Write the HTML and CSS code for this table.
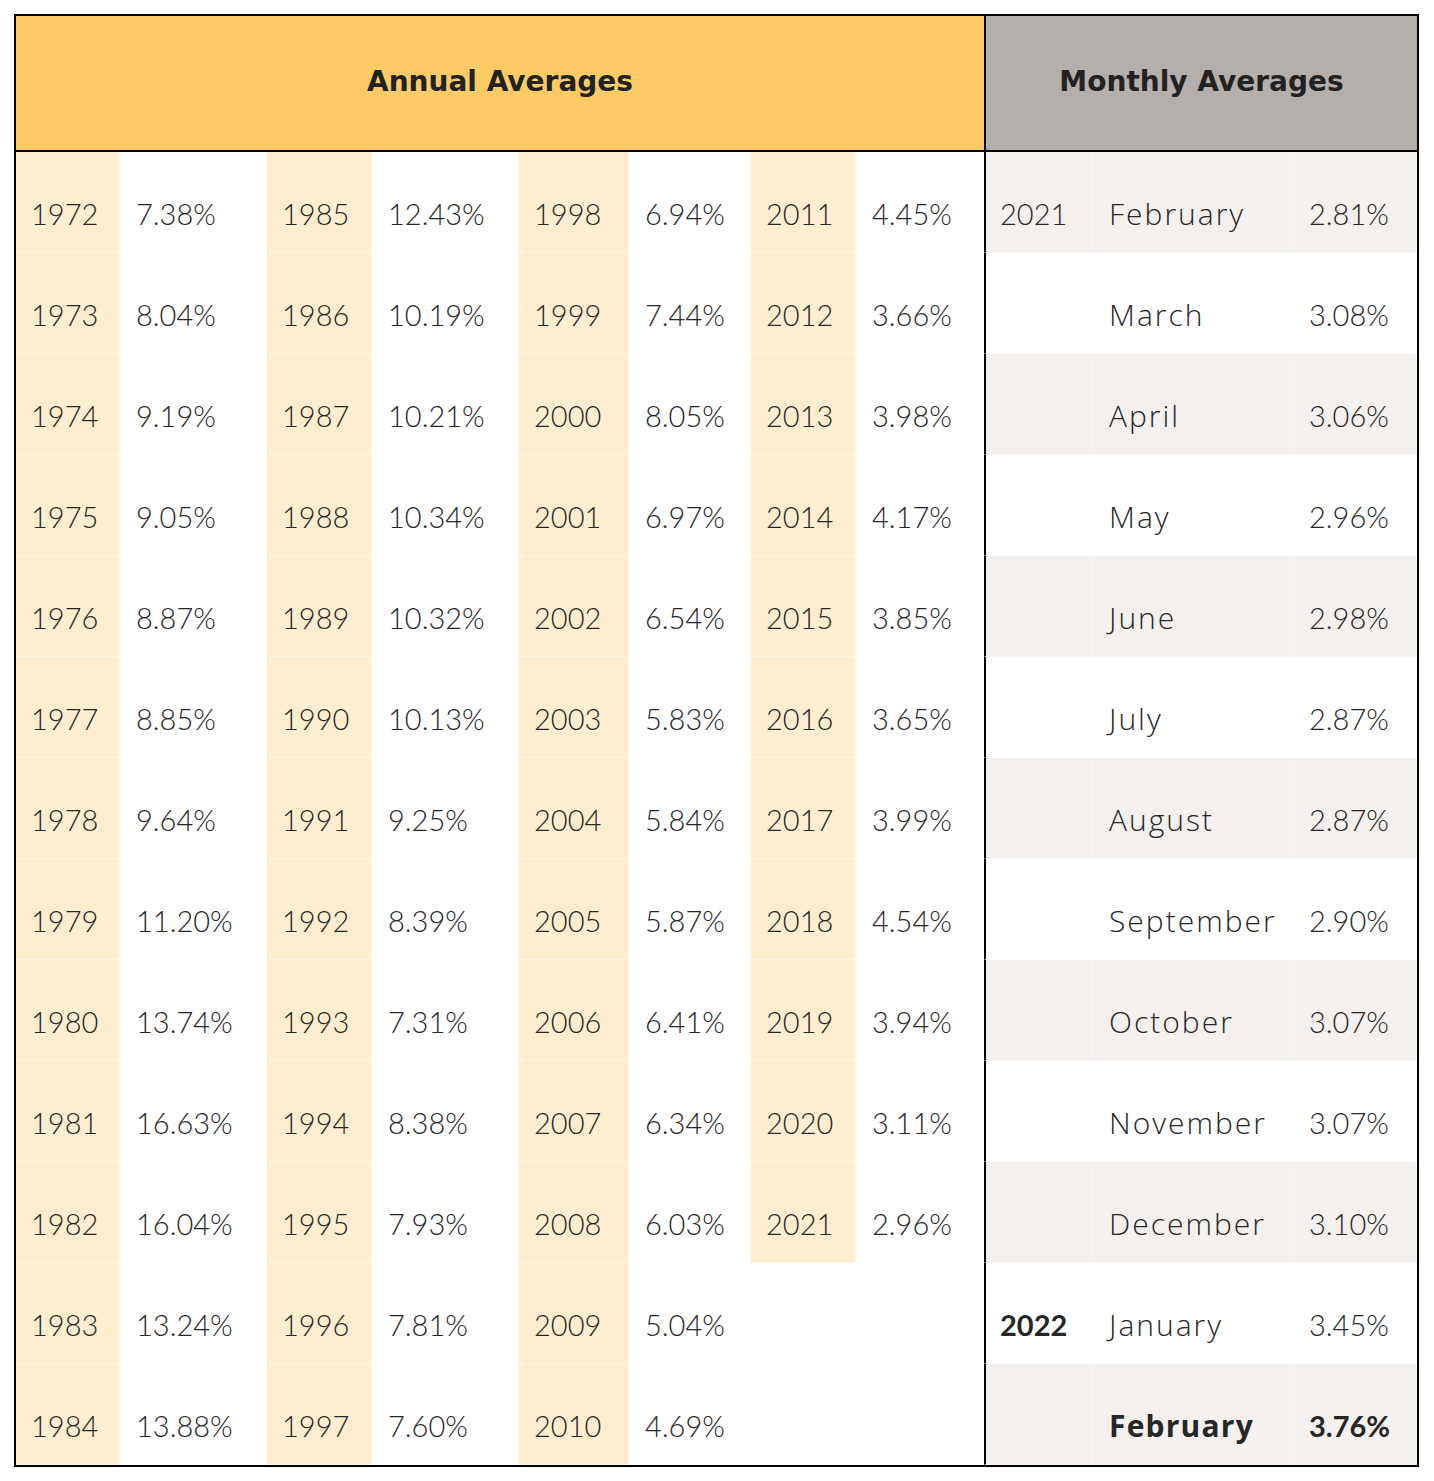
FILE: index.html
```html
<!DOCTYPE html>
<html lang="en">
<head>
<meta charset="utf-8">
<title>Annual and Monthly Averages</title>
<link rel="stylesheet" href="styles.css">
</head>
<body>
<div class="rates">
  <div class="head head-annual">Annual Averages</div>
  <div class="head head-monthly">Monthly Averages</div>

  <div class="c yr">1972</div><div class="c">7.38%</div><div class="c yr">1985</div><div class="c">12.43%</div><div class="c yr">1998</div><div class="c">6.94%</div><div class="c yr">2011</div><div class="c">4.45%</div>
  <div class="c mfirst g">2021</div><div class="c mon g">February</div><div class="c mval g">2.81%</div>

  <div class="c yr">1973</div><div class="c">8.04%</div><div class="c yr">1986</div><div class="c">10.19%</div><div class="c yr">1999</div><div class="c">7.44%</div><div class="c yr">2012</div><div class="c">3.66%</div>
  <div class="c mfirst"></div><div class="c mon">March</div><div class="c mval">3.08%</div>

  <div class="c yr">1974</div><div class="c">9.19%</div><div class="c yr">1987</div><div class="c">10.21%</div><div class="c yr">2000</div><div class="c">8.05%</div><div class="c yr">2013</div><div class="c">3.98%</div>
  <div class="c mfirst g"></div><div class="c mon g">April</div><div class="c mval g">3.06%</div>

  <div class="c yr">1975</div><div class="c">9.05%</div><div class="c yr">1988</div><div class="c">10.34%</div><div class="c yr">2001</div><div class="c">6.97%</div><div class="c yr">2014</div><div class="c">4.17%</div>
  <div class="c mfirst"></div><div class="c mon">May</div><div class="c mval">2.96%</div>

  <div class="c yr">1976</div><div class="c">8.87%</div><div class="c yr">1989</div><div class="c">10.32%</div><div class="c yr">2002</div><div class="c">6.54%</div><div class="c yr">2015</div><div class="c">3.85%</div>
  <div class="c mfirst g"></div><div class="c mon g">June</div><div class="c mval g">2.98%</div>

  <div class="c yr">1977</div><div class="c">8.85%</div><div class="c yr">1990</div><div class="c">10.13%</div><div class="c yr">2003</div><div class="c">5.83%</div><div class="c yr">2016</div><div class="c">3.65%</div>
  <div class="c mfirst"></div><div class="c mon">July</div><div class="c mval">2.87%</div>

  <div class="c yr">1978</div><div class="c">9.64%</div><div class="c yr">1991</div><div class="c">9.25%</div><div class="c yr">2004</div><div class="c">5.84%</div><div class="c yr">2017</div><div class="c">3.99%</div>
  <div class="c mfirst g"></div><div class="c mon g">August</div><div class="c mval g">2.87%</div>

  <div class="c yr">1979</div><div class="c">11.20%</div><div class="c yr">1992</div><div class="c">8.39%</div><div class="c yr">2005</div><div class="c">5.87%</div><div class="c yr">2018</div><div class="c">4.54%</div>
  <div class="c mfirst"></div><div class="c mon">September</div><div class="c mval">2.90%</div>

  <div class="c yr">1980</div><div class="c">13.74%</div><div class="c yr">1993</div><div class="c">7.31%</div><div class="c yr">2006</div><div class="c">6.41%</div><div class="c yr">2019</div><div class="c">3.94%</div>
  <div class="c mfirst g"></div><div class="c mon g">October</div><div class="c mval g">3.07%</div>

  <div class="c yr">1981</div><div class="c">16.63%</div><div class="c yr">1994</div><div class="c">8.38%</div><div class="c yr">2007</div><div class="c">6.34%</div><div class="c yr">2020</div><div class="c">3.11%</div>
  <div class="c mfirst"></div><div class="c mon">November</div><div class="c mval">3.07%</div>

  <div class="c yr">1982</div><div class="c">16.04%</div><div class="c yr">1995</div><div class="c">7.93%</div><div class="c yr">2008</div><div class="c">6.03%</div><div class="c yr">2021</div><div class="c">2.96%</div>
  <div class="c mfirst g"></div><div class="c mon g">December</div><div class="c mval g">3.10%</div>

  <div class="c yr">1983</div><div class="c">13.24%</div><div class="c yr">1996</div><div class="c">7.81%</div><div class="c yr">2009</div><div class="c">5.04%</div><div class="c"></div><div class="c"></div>
  <div class="c mfirst strong">2022</div><div class="c mon">January</div><div class="c mval">3.45%</div>

  <div class="c yr">1984</div><div class="c">13.88%</div><div class="c yr">1997</div><div class="c">7.60%</div><div class="c yr">2010</div><div class="c">4.69%</div><div class="c"></div><div class="c"></div>
  <div class="c mfirst g"></div><div class="c mon g strong">February</div><div class="c mval g strong">3.76%</div>
</div>
</body>
</html>
```

FILE: styles.css
```css
* { box-sizing: border-box; }

body {
  margin: 0;
  padding: 14px;
  background: #ffffff;
  font-family: "Lato", "Liberation Sans", sans-serif;
  color: #262626;
}

.rates {
  display: grid;
  width: 1405px;
  grid-template-columns: 104px 147px 105px 147px 110px 122px 105px 128px 108px 202px 123px;
  grid-template-rows: 136px repeat(13, 101px);
  border: 2px solid #000;
}

.head {
  display: flex;
  align-items: center;
  justify-content: center;
  padding-bottom: 4px;
  border-bottom: 2px solid #000;
  font-family: "DejaVu Sans", sans-serif;
  font-weight: 700;
  font-size: 28px;
  color: #222;
}

.head-annual {
  grid-column: 1 / span 8;
  background: #fdcb65;
}

.head-monthly {
  grid-column: 9 / span 3;
  background: #b4afab;
  border-left: 2px solid #000;
}

.c {
  display: flex;
  align-items: center;
  padding: 22px 0 0 16px;
  font-size: 29px;
  font-weight: 300;
  white-space: nowrap;
  border-right: 1px solid rgba(255, 255, 255, 0.45);
  border-bottom: 1px solid rgba(255, 255, 255, 0.45);
}

.yr { background: #feedce; padding-left: 15px; }

.mfirst { border-left: 2px solid #000; padding-left: 14px; }
.mon {
  padding-left: 17px;
  font-family: "Open Sans", "Lato", sans-serif;
  font-size: 30px;
  letter-spacing: 2px;
}
.mval { padding-left: 15px; }
.g { background: #f3f0ed; }

.strong { font-weight: 700; }
.mon.strong { letter-spacing: 1.2px; }
```
